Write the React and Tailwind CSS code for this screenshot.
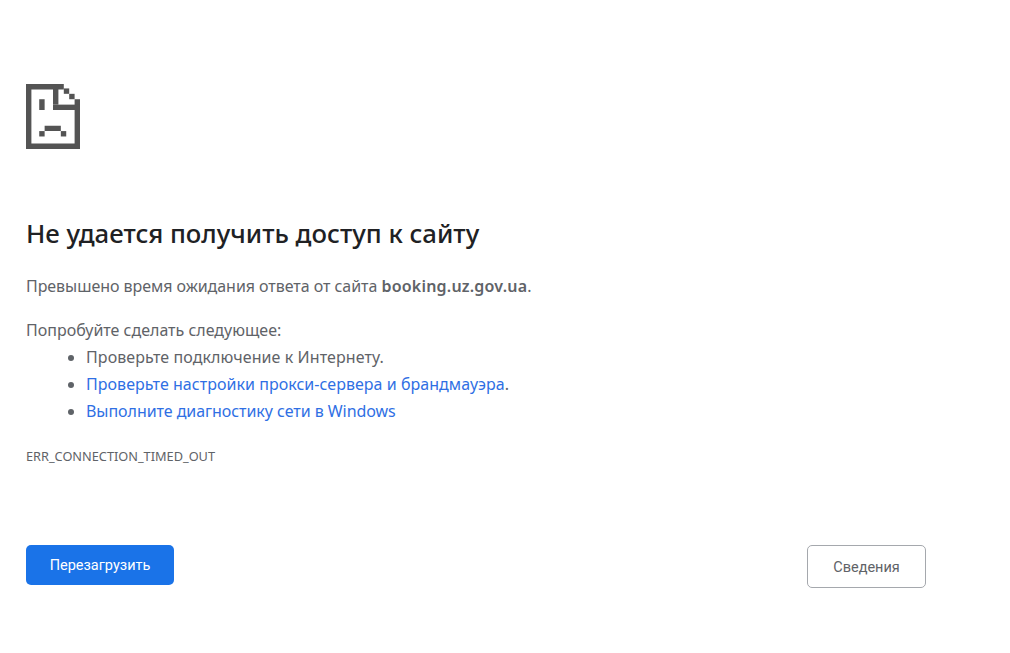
const pixels = [
  // outline
  'M0 0h7v1H0z', 'M0 0h1v12H0z', 'M0 11h10v1H0z', 'M9 2.8h1v9.2H9z',
  // folded corner
  'M5 0h1v3.8H5z', 'M5 3.8h5v1H5z', 'M7 .8h1v1H7z', 'M8 1.8h1v1H8z',
  // eye and mouth
  'M2.45 2.8h1v2h-1z', 'M3.45 7.7h3v1h-3z', 'M2.45 8.7h1v1h-1z', 'M6.45 8.7h1v1h-1z',
];

const SadFile = () => (
  <svg width="54" height="65" viewBox="0 0 10 12" className="block" fill="#545454">
    {pixels.map((d) => (
      <path key={d} d={d} />
    ))}
  </svg>
);

const App = () => {
  return (
    <div className="h-[653px] w-[1010px] overflow-hidden bg-white font-['Noto_Sans',sans-serif] text-[16px] text-[#5f6368]">
      <div className="pl-[26px] pt-[84px]">
        <SadFile />
        <h1 className="mt-[67px] text-[25.75px] leading-[34px] font-medium text-[#202124]">
          Не удается получить доступ к сайту
        </h1>
        <p className="mt-[23px] leading-[27px]">
          <span className="tracking-[-0.05px]">Превышено время ожидания ответа от сайта</span>{' '}
          <b className="font-semibold tracking-[0.2px]">booking.uz.gov.ua</b>.
        </p>
        <p className="mt-[17px] leading-[27px]">Попробуйте сделать следующее:</p>
        <ul className="list-disc pl-[60px] leading-[27px]">
          <li className="tracking-[0.09px]">Проверьте подключение к Интернету.</li>
          <li>
            <a className="text-[#2f6fe4] tracking-[0.04px]">Проверьте настройки прокси-сервера и брандмауэра</a>.
          </li>
          <li>
            <a className="text-[#2f6fe4] tracking-[-0.05px]">Выполните диагностику сети в Windows</a>
          </li>
        </ul>
        <div className="mt-[21px] text-[12.75px] leading-[20px]">ERR_CONNECTION_TIMED_OUT</div>
        <div className="mt-[79px] flex w-[900px] items-start justify-between font-['Roboto',sans-serif] text-[14.5px]">
          <button className="h-[40px] w-[148px] rounded-[5px] bg-[#1a73e8] pt-[2px] text-white">Перезагрузить</button>
          <button className="h-[43px] w-[119px] rounded-[5px] border border-[#a5a8ad] pt-[2px] text-[#5f6368]">Сведения</button>
        </div>
      </div>
    </div>
  );
};

export default App;
